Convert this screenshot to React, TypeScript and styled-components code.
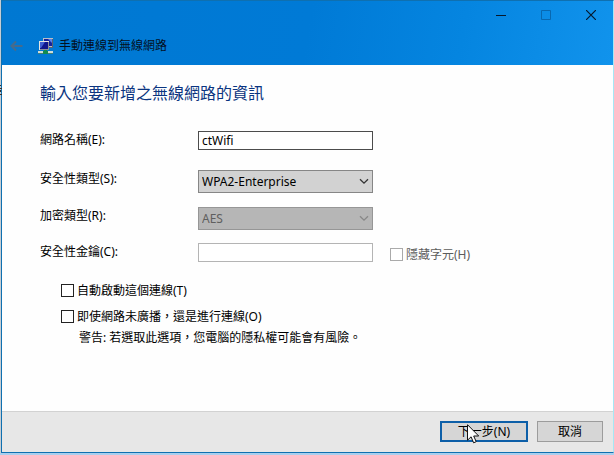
import React, { useState } from "react";
import styled, { createGlobalStyle } from "styled-components";

const GlobalStyle = createGlobalStyle`
  * { box-sizing: border-box; }
  body {
    margin: 0;
    background: #c6d6e4;
    color: #000;
    font: 12px/18px "Noto Sans", "Noto Sans CJK TC", sans-serif;
  }
  button, input, select { font: inherit; color: inherit; margin: 0; }
`;

const Desktop = styled.div`
  position: relative;
  display: flex;
  min-height: 100vh;
  padding: 0 0 2px 1px;
  background: linear-gradient(to top, #a9cfee 2px, #c6cdd4 2px);
`;

const BehindMarks = styled.svg`
  position: absolute;
  left: 0;
  top: 84px;
`;

const Window = styled.div`
  flex: 1;
  display: flex;
  flex-direction: column;
  background: #fefefe;
  border: 1px solid #0f70b0;
  border-right-color: #a5e8f5;
`;

const Header = styled.header`
  padding-bottom: 3px;
  background: linear-gradient(100deg, #0078d2 0%, #007ad6 50%, #0585e0 75%, #1193ec 100%);
`;

const CaptionBar = styled.div`
  display: flex;
  justify-content: flex-end;
  height: 29px;
`;

const CaptionButton = styled.button`
  display: grid;
  place-items: center;
  width: 45px;
  height: 28px;
  padding: 0;
  border: 0;
  background: none;
  color: #06182c;
  &:disabled { color: #0868b0; }
`;

const TitleBar = styled.div`
  display: flex;
  align-items: center;
  height: 32px;
  padding-left: 8px;
`;

const BackButton = styled.button`
  display: flex;
  padding: 0;
  border: 0;
  margin-right: 14px;
  background: none;
  color: #456b8c;
`;

const Title = styled.span`
  margin-left: 5px;
  color: #03101f;
`;

const Main = styled.main`
  flex: 1;
  padding: 16px 38px;
`;

const Heading = styled.h1`
  margin: 0 0 26px;
  font-size: 16px;
  line-height: 24px;
  font-weight: 400;
  color: #0a3480;
`;

const Field = styled.div<{ $space: number }>`
  display: flex;
  align-items: flex-start;
  margin-bottom: ${(p) => p.$space}px;
`;

const FieldLabel = styled.label`
  width: 158px;
  line-height: 18px;
`;

const TextBox = styled.input`
  width: 175px;
  height: 19px;
  padding: 0 3px;
  border: 1px solid #4c4c4c;
  background: #fff;
  outline: 0;
  &:disabled { border-color: #b4b4b4; }
`;

const SelectWrap = styled.div`
  display: grid;
  width: 175px;
  > * { grid-area: 1 / 1; }
  > svg {
    align-self: center;
    justify-self: end;
    margin-right: 4px;
    pointer-events: none;
  }
`;

const Select = styled.select`
  appearance: none;
  width: 100%;
  height: 23px;
  padding: 0 20px 0 3px;
  border: 1px solid #868686;
  border-radius: 0;
  background: #d2d2d2;
  &:disabled {
    opacity: 1;
    color: #5f5f5f;
    border-color: #969696;
    background: #b6b6b6;
  }
`;

const CheckLabel = styled.label<{ $muted?: boolean }>`
  display: flex;
  align-items: center;
  gap: 3px;
  color: ${(p) => (p.$muted ? "#5c5c5c" : "#000")};
`;

const CheckBox = styled.input`
  appearance: none;
  width: 13px;
  height: 13px;
  && { margin-bottom: 2px; }
  border: 1px solid #222;
  background: #fff;
  &:disabled { border-color: #aaa; }
  &:checked { background: #222; box-shadow: inset 0 0 0 2px #fff; }
`;

const InlineCheck = styled.div`
  padding: 3px 0 0 17px;
`;

const Options = styled.div`
  display: flex;
  flex-direction: column;
  gap: 8px;
  margin-top: 18px;
  padding-left: 21px;
`;

const Warning = styled.p`
  margin: 3px 0 0 39px;
`;

const Footer = styled.footer`
  display: flex;
  justify-content: flex-end;
  gap: 9px;
  padding: 9px 10px 10px;
  border-top: 1px solid #d2d2d2;
  background: #e7e7e7;
`;

const ActionButton = styled.button<{ $primary?: boolean }>`
  width: ${(p) => (p.$primary ? 88 : 66)}px;
  height: 21px;
  padding: 0;
  line-height: 17px;
  border: ${(p) => (p.$primary ? "2px solid #0d5fa8" : "1px solid #9c9c9c")};
  background: #d6d6d6;
`;

const ActionSlot = styled.div`
  position: relative;
  display: flex;
`;

const Pointer = styled.svg`
  position: absolute;
  left: 27px;
  top: 3px;
  pointer-events: none;
`;

const Chevron = ({ color }: { color: string }) => (
  <svg width="10" height="7" viewBox="0 0 10 7" fill="none" stroke={color} strokeWidth="1.3">
    <path d="M1 1.2 5 5.2 9 1.2" />
  </svg>
);

const NetworkIcon = () => (
  <svg width="16" height="17" viewBox="0 0 16 17">
    <path d="M5 0h10v9H5z" fill="#b9bec8" />
    <path d="M6 1h8v7H6z" fill="#16229c" />
    <path d="M10 1h4v4z" fill="#5d83e6" />
    <path d="M14 1h1v9h-5V9h4z" fill="#5a6270" />
    <path d="M1 3h10v9H1z" fill="#e4e5e2" />
    <path d="M2 4h8v7H2z" fill="#10168c" />
    <path d="M2 4h5l-4 6H2z" fill="#3f5fd2" />
    <path d="M10 4h1v8H2v-1h8z" fill="#8b9098" />
    <path d="M6 12h3v1h1v3H5v-3h1z" fill="#128c50" />
    <path d="M0 13h5v2H0zM10 13h5v2h-5z" fill="#cfdcd8" />
    <path d="M0 15h5v1H0zM10 15h5v1h-5z" fill="#43807a" />
  </svg>
);

export default function App() {
  const [name, setName] = useState("ctWifi");
  return (
    <>
      <GlobalStyle />
      <Desktop>
        <BehindMarks width="2" height="12" viewBox="0 0 2 12" aria-hidden="true">
          <path d="M0 1h1v1H0zM0 4h2v1H0zM0 6h1v2H0zM0 10h2v1H0z" fill="#333" />
        </BehindMarks>
        <Window>
          <Header>
            <CaptionBar>
              <CaptionButton aria-label="最小化">
                <svg width="10" height="10" viewBox="0 0 10 10"><path d="M0 5h10v1H0z" fill="currentColor" /></svg>
              </CaptionButton>
              <CaptionButton aria-label="最大化" disabled>
                <svg width="10" height="10" viewBox="0 0 10 10"><path d="M.5.5h9v9h-9z" fill="none" stroke="currentColor" /></svg>
              </CaptionButton>
              <CaptionButton aria-label="關閉">
                <svg width="10" height="10" viewBox="0 0 10 10"><path d="M0 0l10 10M10 0L0 10" stroke="currentColor" strokeWidth="1.2" /></svg>
              </CaptionButton>
            </CaptionBar>
            <TitleBar>
              <BackButton aria-label="上一步">
                <svg width="14" height="12" viewBox="0 0 14 12" fill="none" stroke="currentColor" strokeWidth="2">
                  <path d="M12.500 6H2M6 1.500 1.500 6 6 10.500" />
                </svg>
              </BackButton>
              <NetworkIcon />
              <Title>手動連線到無線網路</Title>
            </TitleBar>
          </Header>
          <Main>
            <Heading>輸入您要新增之無線網路的資訊</Heading>
            <Field $space={20}>
              <FieldLabel htmlFor="ssid">網路名稱(E):</FieldLabel>
              <TextBox id="ssid" value={name} onChange={(e) => setName(e.target.value)} />
            </Field>
            <Field $space={14}>
              <FieldLabel htmlFor="security">安全性類型(S):</FieldLabel>
              <SelectWrap>
                <Select id="security"><option>WPA2-Enterprise</option></Select>
                <Chevron color="#333" />
              </SelectWrap>
            </Field>
            <Field $space={13}>
              <FieldLabel htmlFor="encryption">加密類型(R):</FieldLabel>
              <SelectWrap>
                <Select id="encryption" disabled><option>AES</option></Select>
                <Chevron color="#888" />
              </SelectWrap>
            </Field>
            <Field $space={0}>
              <FieldLabel htmlFor="key">安全性金鑰(C):</FieldLabel>
              <TextBox id="key" disabled />
              <InlineCheck>
                <CheckLabel $muted><CheckBox type="checkbox" disabled />隱藏字元(H)</CheckLabel>
              </InlineCheck>
            </Field>
            <Options>
              <CheckLabel><CheckBox type="checkbox" />自動啟動這個連線(T)</CheckLabel>
              <CheckLabel><CheckBox type="checkbox" />即使網路未廣播，還是進行連線(O)</CheckLabel>
            </Options>
            <Warning>警告: 若選取此選項，您電腦的隱私權可能會有風險。</Warning>
          </Main>
          <Footer>
            <ActionSlot>
              <ActionButton $primary>下一步(N)</ActionButton>
              <Pointer width="13" height="20" viewBox="0 0 13 20" aria-hidden="true">
                <path d="M.5.700v15.500l3.600-3.400 2.500 6 2.600-1.100-2.500-5.700h5z" fill="#fff" stroke="#111" />
              </Pointer>
            </ActionSlot>
            <ActionButton>取消</ActionButton>
          </Footer>
        </Window>
      </Desktop>
    </>
  );
}
